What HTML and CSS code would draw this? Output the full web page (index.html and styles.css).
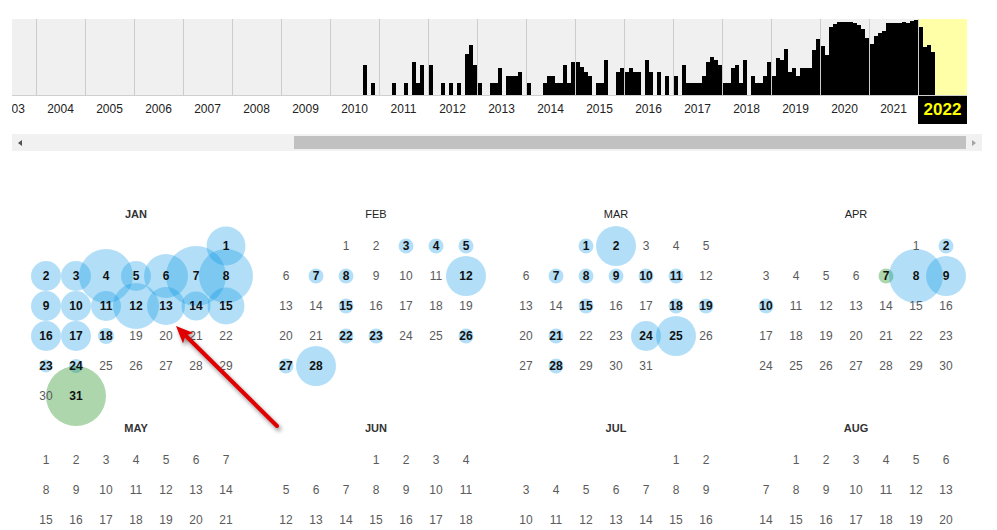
FILE: index.html
```html
<!DOCTYPE html>
<html lang="en">
<head>
<meta charset="utf-8">
<title>Calendar 2022</title>
<link rel="stylesheet" href="styles.css">
</head>
<body>
<div class="page">
  <div class="timeline">
    <div class="chart">
      <div class="yr first"></div>
      <div class="yr"></div><div class="yr"></div><div class="yr"></div><div class="yr"></div><div class="yr"></div><div class="yr"></div>
      <div class="yr"><i></i><i></i><i></i><i></i><i></i><i></i><i></i><i></i><i style="height:30px"></i><i></i><i style="height:12px"></i><i></i></div>
      <div class="yr"><i></i><i></i><i></i><i style="height:12px"></i><i></i><i></i><i style="height:12px"></i><i></i><i style="height:33px"></i><i style="height:12px"></i><i style="height:30px"></i><i></i></div>
      <div class="yr"><i style="height:30px"></i><i></i><i></i><i style="height:12px"></i><i></i><i style="height:12px"></i><i></i><i style="height:12px"></i><i></i><i style="height:41px"></i><i style="height:50px"></i><i style="height:30px"></i></div>
      <div class="yr"><i style="height:12px"></i><i></i><i></i><i style="height:12px"></i><i style="height:12px"></i><i style="height:27px"></i><i></i><i style="height:19px"></i><i style="height:19px"></i><i style="height:19px"></i><i style="height:23px"></i><i></i></div>
      <div class="yr"><i style="height:12px"></i><i></i><i></i><i></i><i style="height:12px"></i><i style="height:19px"></i><i style="height:19px"></i><i style="height:12px"></i><i style="height:12px"></i><i style="height:30px"></i><i style="height:12px"></i><i style="height:33px"></i></div>
      <div class="yr"><i style="height:33px"></i><i style="height:28px"></i><i style="height:23px"></i><i style="height:19px"></i><i></i><i style="height:12px"></i><i style="height:12px"></i><i style="height:35px"></i><i></i><i></i><i style="height:23px"></i><i style="height:27px"></i></div>
      <div class="yr"><i style="height:23px"></i><i style="height:27px"></i><i style="height:23px"></i><i style="height:23px"></i><i></i><i style="height:35px"></i><i style="height:23px"></i><i></i><i style="height:23px"></i><i></i><i style="height:19px"></i><i></i></div>
      <div class="yr"><i style="height:19px"></i><i></i><i style="height:30px"></i><i style="height:12px"></i><i style="height:12px"></i><i style="height:12px"></i><i style="height:12px"></i><i style="height:19px"></i><i style="height:33px"></i><i style="height:38px"></i><i style="height:35px"></i><i style="height:30px"></i></div>
      <div class="yr"><i style="height:12px"></i><i style="height:12px"></i><i style="height:27px"></i><i style="height:30px"></i><i style="height:12px"></i><i style="height:35px"></i><i></i><i style="height:19px"></i><i style="height:12px"></i><i style="height:12px"></i><i style="height:19px"></i><i style="height:33px"></i></div>
      <div class="yr"><i style="height:19px"></i><i style="height:37px"></i><i style="height:35px"></i><i style="height:46px"></i><i style="height:23px"></i><i style="height:27px"></i><i style="height:19px"></i><i style="height:27px"></i><i style="height:27px"></i><i style="height:27px"></i><i style="height:45px"></i><i style="height:56px"></i></div>
      <div class="yr"><i style="height:49px"></i><i style="height:40px"></i><i style="height:68px"></i><i style="height:71px"></i><i style="height:73px"></i><i style="height:73px"></i><i style="height:73px"></i><i style="height:73px"></i><i style="height:72px"></i><i style="height:70px"></i><i style="height:66px"></i><i style="height:57px"></i></div>
      <div class="yr"><i style="height:51px"></i><i style="height:59px"></i><i style="height:62px"></i><i style="height:64px"></i><i style="height:72px"></i><i style="height:72px"></i><i style="height:72px"></i><i style="height:72px"></i><i style="height:73px"></i><i style="height:72px"></i><i style="height:74px"></i><i style="height:75px"></i></div>
      <div class="yr cur"><i style="height:68px"></i><i style="height:48px"></i><i style="height:50px"></i><i style="height:43px"></i></div>
    </div>
    <div class="years">
      <span class="first">2003</span><span>2004</span><span>2005</span><span>2006</span><span>2007</span><span>2008</span><span>2009</span><span>2010</span><span>2011</span><span>2012</span><span>2013</span><span>2014</span><span>2015</span><span>2016</span><span>2017</span><span>2018</span><span>2019</span><span>2020</span><span>2021</span><span class="cur">2022</span>
    </div>
  </div>

  <div class="scrollbar">
    <div class="sb-btn"><span class="tri-left"></span></div>
    <div class="sb-track"><div class="sb-thumb"></div></div>
    <div class="sb-btn"><span class="tri-right"></span></div>
  </div>

  <div class="calendar">
    <div class="month">
      <div class="mtitle">JAN</div>
      <div class="days">
        <span></span><span></span><span></span><span></span><span></span><span></span>
        <span class="day c" style="--s:39px">1</span>
        <span class="day c" style="--s:30px">2</span><span class="day c" style="--s:30px">3</span><span class="day c" style="--s:54px">4</span><span class="day c" style="--s:30px">5</span><span class="day c" style="--s:44px">6</span><span class="day c" style="--s:60px">7</span><span class="day c" style="--s:54px">8</span>
        <span class="day c" style="--s:30px">9</span><span class="day c" style="--s:30px">10</span><span class="day c" style="--s:30px">11</span><span class="day c" style="--s:46px">12</span><span class="day c" style="--s:38px">13</span><span class="day c" style="--s:29px">14</span><span class="day c" style="--s:37px">15</span>
        <span class="day c" style="--s:30px">16</span><span class="day c" style="--s:30px">17</span><span class="day c" style="--s:16px">18</span><span class="day">19</span><span class="day">20</span><span class="day">21</span><span class="day">22</span>
        <span class="day c" style="--s:13px">23</span><span class="day c" style="--s:14px">24</span><span class="day">25</span><span class="day">26</span><span class="day">27</span><span class="day">28</span><span class="day">29</span>
        <span class="day">30</span><span class="day c g" style="--s:60px">31</span>
      </div>
    </div>
    <div class="month">
      <div class="mtitle light">FEB</div>
      <div class="days">
        <span></span><span></span>
        <span class="day">1</span><span class="day">2</span><span class="day c" style="--s:15px">3</span><span class="day c" style="--s:15px">4</span><span class="day c" style="--s:15px">5</span>
        <span class="day">6</span><span class="day c" style="--s:15px">7</span><span class="day c" style="--s:15px">8</span><span class="day">9</span><span class="day">10</span><span class="day">11</span><span class="day c" style="--s:40px">12</span>
        <span class="day">13</span><span class="day">14</span><span class="day c" style="--s:15px">15</span><span class="day">16</span><span class="day">17</span><span class="day">18</span><span class="day">19</span>
        <span class="day">20</span><span class="day">21</span><span class="day c" style="--s:15px">22</span><span class="day c" style="--s:15px">23</span><span class="day">24</span><span class="day">25</span><span class="day c" style="--s:15px">26</span>
        <span class="day c" style="--s:15px">27</span><span class="day c" style="--s:40px">28</span>
      </div>
    </div>
    <div class="month">
      <div class="mtitle light">MAR</div>
      <div class="days">
        <span></span><span></span>
        <span class="day c" style="--s:15px">1</span><span class="day c" style="--s:40px">2</span><span class="day">3</span><span class="day">4</span><span class="day">5</span>
        <span class="day">6</span><span class="day c" style="--s:15px">7</span><span class="day c" style="--s:15px">8</span><span class="day c" style="--s:15px">9</span><span class="day c" style="--s:15px">10</span><span class="day c" style="--s:15px">11</span><span class="day">12</span>
        <span class="day">13</span><span class="day">14</span><span class="day c" style="--s:15px">15</span><span class="day">16</span><span class="day">17</span><span class="day c" style="--s:15px">18</span><span class="day c" style="--s:15px">19</span>
        <span class="day">20</span><span class="day c" style="--s:15px">21</span><span class="day">22</span><span class="day">23</span><span class="day c" style="--s:30px">24</span><span class="day c" style="--s:40px">25</span><span class="day">26</span>
        <span class="day">27</span><span class="day c" style="--s:15px">28</span><span class="day">29</span><span class="day">30</span><span class="day">31</span>
      </div>
    </div>
    <div class="month">
      <div class="mtitle light">APR</div>
      <div class="days">
        <span></span><span></span><span></span><span></span><span></span>
        <span class="day">1</span><span class="day c" style="--s:15px">2</span>
        <span class="day">3</span><span class="day">4</span><span class="day">5</span><span class="day">6</span><span class="day c g" style="--s:15px">7</span><span class="day c" style="--s:54px">8</span><span class="day c" style="--s:40px">9</span>
        <span class="day c" style="--s:15px">10</span><span class="day">11</span><span class="day">12</span><span class="day">13</span><span class="day">14</span><span class="day">15</span><span class="day">16</span>
        <span class="day">17</span><span class="day">18</span><span class="day">19</span><span class="day">20</span><span class="day">21</span><span class="day">22</span><span class="day">23</span>
        <span class="day">24</span><span class="day">25</span><span class="day">26</span><span class="day">27</span><span class="day">28</span><span class="day">29</span><span class="day">30</span>
      </div>
    </div>
    <div class="month">
      <div class="mtitle">MAY</div>
      <div class="days">
        <span class="day">1</span><span class="day">2</span><span class="day">3</span><span class="day">4</span><span class="day">5</span><span class="day">6</span><span class="day">7</span>
        <span class="day">8</span><span class="day">9</span><span class="day">10</span><span class="day">11</span><span class="day">12</span><span class="day">13</span><span class="day">14</span>
        <span class="day">15</span><span class="day">16</span><span class="day">17</span><span class="day">18</span><span class="day">19</span><span class="day">20</span><span class="day">21</span>
        <span class="day">22</span><span class="day">23</span><span class="day">24</span><span class="day">25</span><span class="day">26</span><span class="day">27</span><span class="day">28</span>
        <span class="day">29</span><span class="day">30</span><span class="day">31</span>
      </div>
    </div>
    <div class="month">
      <div class="mtitle">JUN</div>
      <div class="days">
        <span></span><span></span><span></span>
        <span class="day">1</span><span class="day">2</span><span class="day">3</span><span class="day">4</span>
        <span class="day">5</span><span class="day">6</span><span class="day">7</span><span class="day">8</span><span class="day">9</span><span class="day">10</span><span class="day">11</span>
        <span class="day">12</span><span class="day">13</span><span class="day">14</span><span class="day">15</span><span class="day">16</span><span class="day">17</span><span class="day">18</span>
        <span class="day">19</span><span class="day">20</span><span class="day">21</span><span class="day">22</span><span class="day">23</span><span class="day">24</span><span class="day">25</span>
        <span class="day">26</span><span class="day">27</span><span class="day">28</span><span class="day">29</span><span class="day">30</span>
      </div>
    </div>
    <div class="month">
      <div class="mtitle">JUL</div>
      <div class="days">
        <span></span><span></span><span></span><span></span><span></span>
        <span class="day">1</span><span class="day">2</span>
        <span class="day">3</span><span class="day">4</span><span class="day">5</span><span class="day">6</span><span class="day">7</span><span class="day">8</span><span class="day">9</span>
        <span class="day">10</span><span class="day">11</span><span class="day">12</span><span class="day">13</span><span class="day">14</span><span class="day">15</span><span class="day">16</span>
        <span class="day">17</span><span class="day">18</span><span class="day">19</span><span class="day">20</span><span class="day">21</span><span class="day">22</span><span class="day">23</span>
        <span class="day">24</span><span class="day">25</span><span class="day">26</span><span class="day">27</span><span class="day">28</span><span class="day">29</span><span class="day">30</span>
        <span class="day">31</span>
      </div>
    </div>
    <div class="month">
      <div class="mtitle">AUG</div>
      <div class="days">
        <span></span>
        <span class="day">1</span><span class="day">2</span><span class="day">3</span><span class="day">4</span><span class="day">5</span><span class="day">6</span>
        <span class="day">7</span><span class="day">8</span><span class="day">9</span><span class="day">10</span><span class="day">11</span><span class="day">12</span><span class="day">13</span>
        <span class="day">14</span><span class="day">15</span><span class="day">16</span><span class="day">17</span><span class="day">18</span><span class="day">19</span><span class="day">20</span>
        <span class="day">21</span><span class="day">22</span><span class="day">23</span><span class="day">24</span><span class="day">25</span><span class="day">26</span><span class="day">27</span>
        <span class="day">28</span><span class="day">29</span><span class="day">30</span><span class="day">31</span>
      </div>
    </div>
  </div>

  <svg class="arrow" width="997" height="530" viewBox="0 0 997 530" aria-hidden="true">
    <line x1="277" y1="426" x2="186" y2="336" stroke="#e00000" stroke-width="4" stroke-linecap="round"/>
    <polygon points="176,326 193.5,333 185.5,335.5 183,343.5" fill="#e00000"/>
  </svg>
</div>
</body>
</html>
```

FILE: styles.css
```css
* { box-sizing: border-box; }

html, body {
  margin: 0;
  padding: 0;
  background: #fff;
}

body {
  font-family: "Liberation Sans", Arial, Helvetica, sans-serif;
}

.page {
  position: relative;
  height: 530px;
  overflow: hidden;
  padding: 19px 0 0 12px;
}

/* ---------- timeline ---------- */
.timeline {
  width: 955px;
  overflow: hidden;
}

.chart {
  display: flex;
  height: 77px;
  background: #f0f0f0;
  border-bottom: 1px solid #cfcfcf;
}

.yr {
  flex: none;
  width: 49px;
  border-left: 1px solid #cccccc;
  display: flex;
  align-items: flex-end;
}

.yr.first { margin-left: -25px; }
.yr.cur { background: #ffffa8; }

.yr i {
  display: block;
  flex: none;
  width: 4px;
  height: 0;
  background: #000;
}

.years {
  display: flex;
  height: 28px;
}

.years span {
  flex: none;
  width: 49px;
  text-align: center;
  font-size: 12px;
  line-height: 27px;
  color: #222;
}

.years .first { margin-left: -25px; }

.years .cur {
  background: #000;
  color: #ffff00;
  font-weight: bold;
  font-size: 17px;
  line-height: 28px;
}

/* ---------- scrollbar ---------- */
.scrollbar {
  display: flex;
  width: 970px;
  height: 17px;
  margin-top: 10px;
  background: #f1f1f1;
}

.sb-btn {
  flex: none;
  width: 16px;
  height: 17px;
  display: flex;
  align-items: center;
  justify-content: center;
}

.tri-left {
  width: 0;
  height: 0;
  border-top: 3.5px solid transparent;
  border-bottom: 3.5px solid transparent;
  border-right: 4px solid #505050;
}

.tri-right {
  width: 0;
  height: 0;
  border-top: 3.5px solid transparent;
  border-bottom: 3.5px solid transparent;
  border-left: 4px solid #a3a3a3;
}

.sb-track {
  flex: 1;
  display: flex;
  padding: 2px 0;
}

.sb-thumb {
  flex: 1;
  margin-left: 266px;
  background: #c1c1c1;
}

/* ---------- calendar ---------- */
.calendar {
  position: relative;
  z-index: 0;
  display: grid;
  grid-template-columns: repeat(4, 240px);
  margin: 46px 0 0 4px;
}

.month {
  padding: 0 15px;
}

.mtitle {
  height: 34px;
  line-height: 34px;
  text-align: center;
  font-size: 11px;
  font-weight: bold;
  color: #333;
}

.mtitle.light {
  font-weight: normal;
  color: #222;
}

.days {
  display: grid;
  grid-template-columns: repeat(7, 30px);
  grid-auto-rows: 30px;
  height: 180px;
}

.day {
  position: relative;
  text-align: center;
  line-height: 30px;
  font-size: 12px;
  color: #5a5a5a;
}

.day.c {
  font-weight: bold;
  color: #111;
}

.day.c::before {
  content: "";
  position: absolute;
  left: 50%;
  top: 50%;
  width: var(--s);
  height: var(--s);
  transform: translate(-50%, -50%);
  border-radius: 50%;
  background: rgba(0, 150, 230, 0.3);
  z-index: -1;
}

.day.g::before {
  background: rgba(0, 128, 0, 0.32);
}

/* ---------- annotation arrow ---------- */
.arrow {
  position: absolute;
  left: 0;
  top: 0;
  z-index: 5;
  pointer-events: none;
  filter: drop-shadow(2px 3px 2px rgba(0, 0, 0, 0.45));
}
```
